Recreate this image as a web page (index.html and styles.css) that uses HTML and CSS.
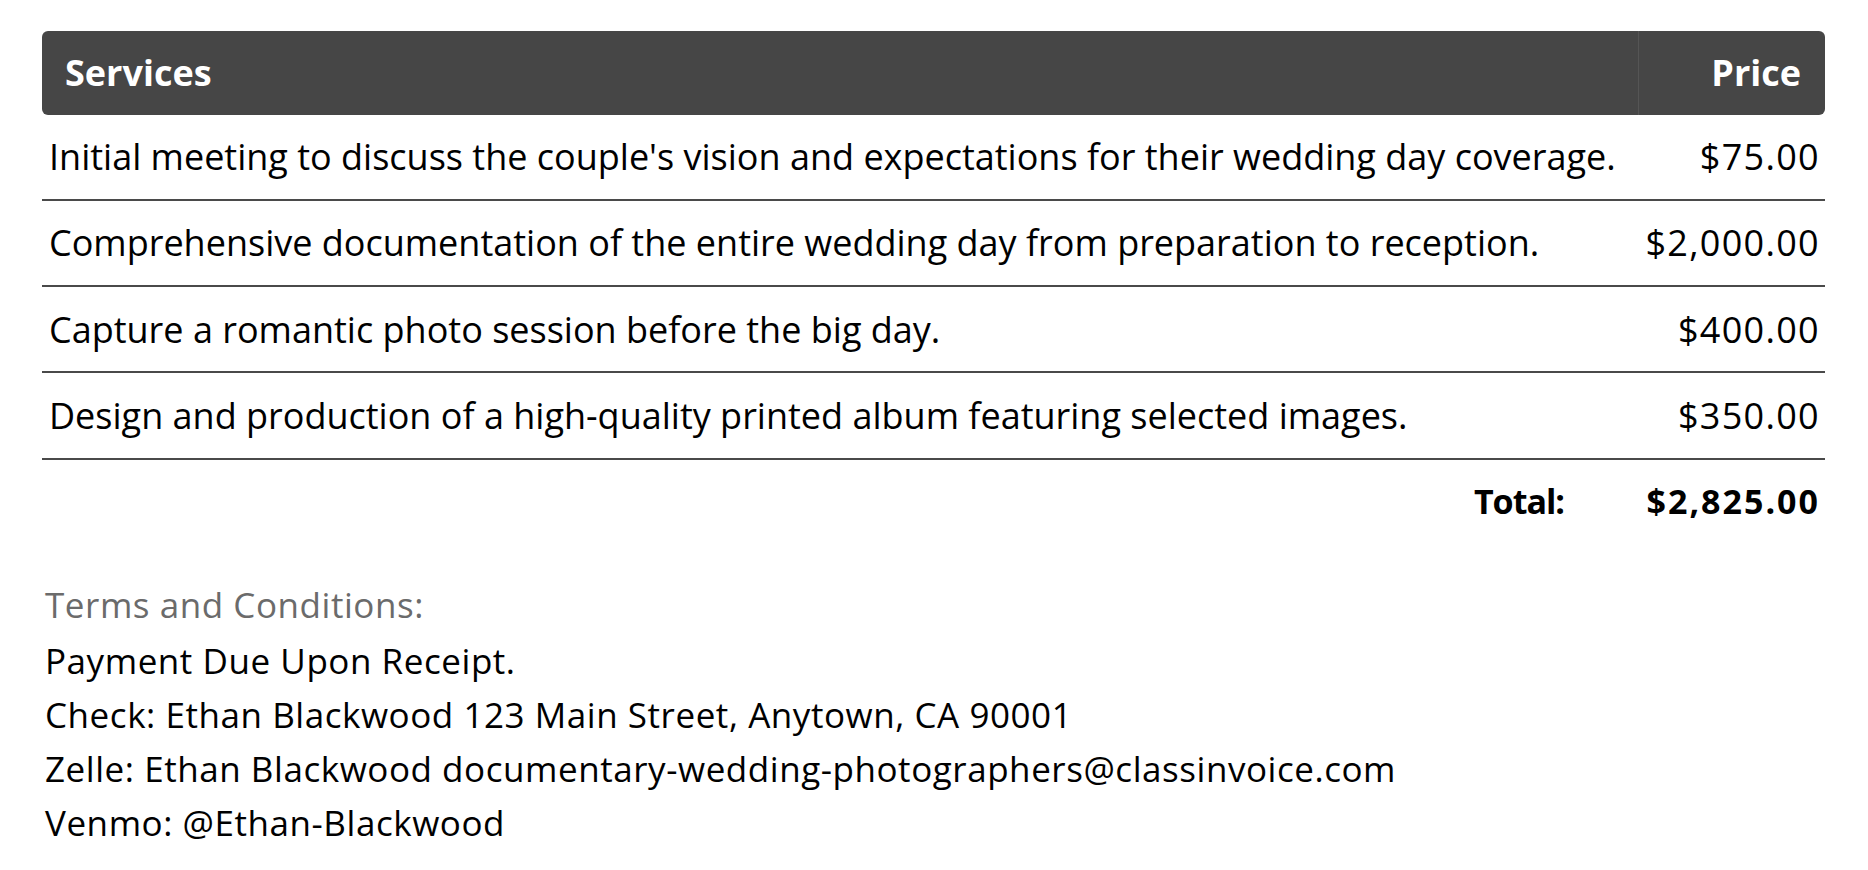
FILE: index.html
```html
<!DOCTYPE html>
<html lang="en">
<head>
<meta charset="utf-8">
<title>Invoice services</title>
<link rel="stylesheet" href="styles.css">
</head>
<body>
<div class="invoice">
  <div class="items">
    <div class="head">
      <div class="h-service">Services</div>
      <div class="h-price">Price</div>
    </div>
    <div class="row">
      <div class="desc">Initial meeting to discuss the couple's vision and expectations for their wedding day coverage.</div>
      <div class="price">$75.00</div>
    </div>
    <div class="row">
      <div class="desc">Comprehensive documentation of the entire wedding day from preparation to reception.</div>
      <div class="price">$2,000.00</div>
    </div>
    <div class="row">
      <div class="desc">Capture a romantic photo session before the big day.</div>
      <div class="price">$400.00</div>
    </div>
    <div class="row">
      <div class="desc">Design and production of a high-quality printed album featuring selected images.</div>
      <div class="price">$350.00</div>
    </div>
    <div class="total">
      <div class="total-label">Total:</div>
      <div class="total-value">$2,825.00</div>
    </div>
  </div>
  <div class="terms">
    <div class="terms-title">Terms and Conditions:</div>
    <div class="terms-line">Payment Due Upon Receipt.</div>
    <div class="terms-line">Check: Ethan Blackwood 123 Main Street, Anytown, CA 90001</div>
    <div class="terms-line">Zelle: Ethan Blackwood documentary-wedding-photographers@classinvoice.com</div>
    <div class="terms-line">Venmo: @Ethan-Blackwood</div>
  </div>
</div>
</body>
</html>
```
FILE: styles.css
```css
html, body {
  margin: 0;
  padding: 0;
  background: #ffffff;
}
body {
  font-family: "Open Sans", "Noto Sans", sans-serif;
  color: #000;
}
.invoice {
  width: 1783px;
  padding: 31px 0 0 42px;
}
.items {
  display: flex;
  flex-direction: column;
}
.head {
  display: grid;
  grid-template-columns: 1fr 187px;
  height: 83.5px;
  background: #464646;
  border-radius: 6px;
  color: #fff;
  font-weight: 700;
  font-size: 36px;
}
.h-service {
  display: flex;
  align-items: center;
  padding-left: 23px;
}
.h-price {
  display: flex;
  align-items: center;
  justify-content: flex-end;
  padding-right: 24px;
  border-left: 1px solid #555;
}
.row {
  box-sizing: border-box;
  display: grid;
  grid-template-columns: 1fr 187px;
  height: 86.3px;
  border-bottom: 2px solid #4a4a4a;
  font-size: 36px;
  align-items: center;
}
.desc {
  padding-left: 7px;
  white-space: nowrap;
}
.price {
  text-align: right;
  padding-right: 5px;
  letter-spacing: 1.3px;
}
.total {
  display: grid;
  grid-template-columns: 1fr 187px;
  height: 82px;
  align-items: center;
  font-size: 34px;
  font-weight: 700;
}
.total-label {
  text-align: right;
  padding-right: 74px;
  letter-spacing: -1px;
}
.total-value {
  text-align: right;
  padding-right: 5px;
  letter-spacing: 2px;
}
.terms {
  padding: 36px 0 0 3px;
  font-size: 35px;
  letter-spacing: 0.55px;
  display: flex;
  flex-direction: column;
}
.terms-title {
  color: #6b6b6b;
  line-height: 54px;
  margin-bottom: 2px;
}
.terms-line {
  line-height: 54px;
}
```
